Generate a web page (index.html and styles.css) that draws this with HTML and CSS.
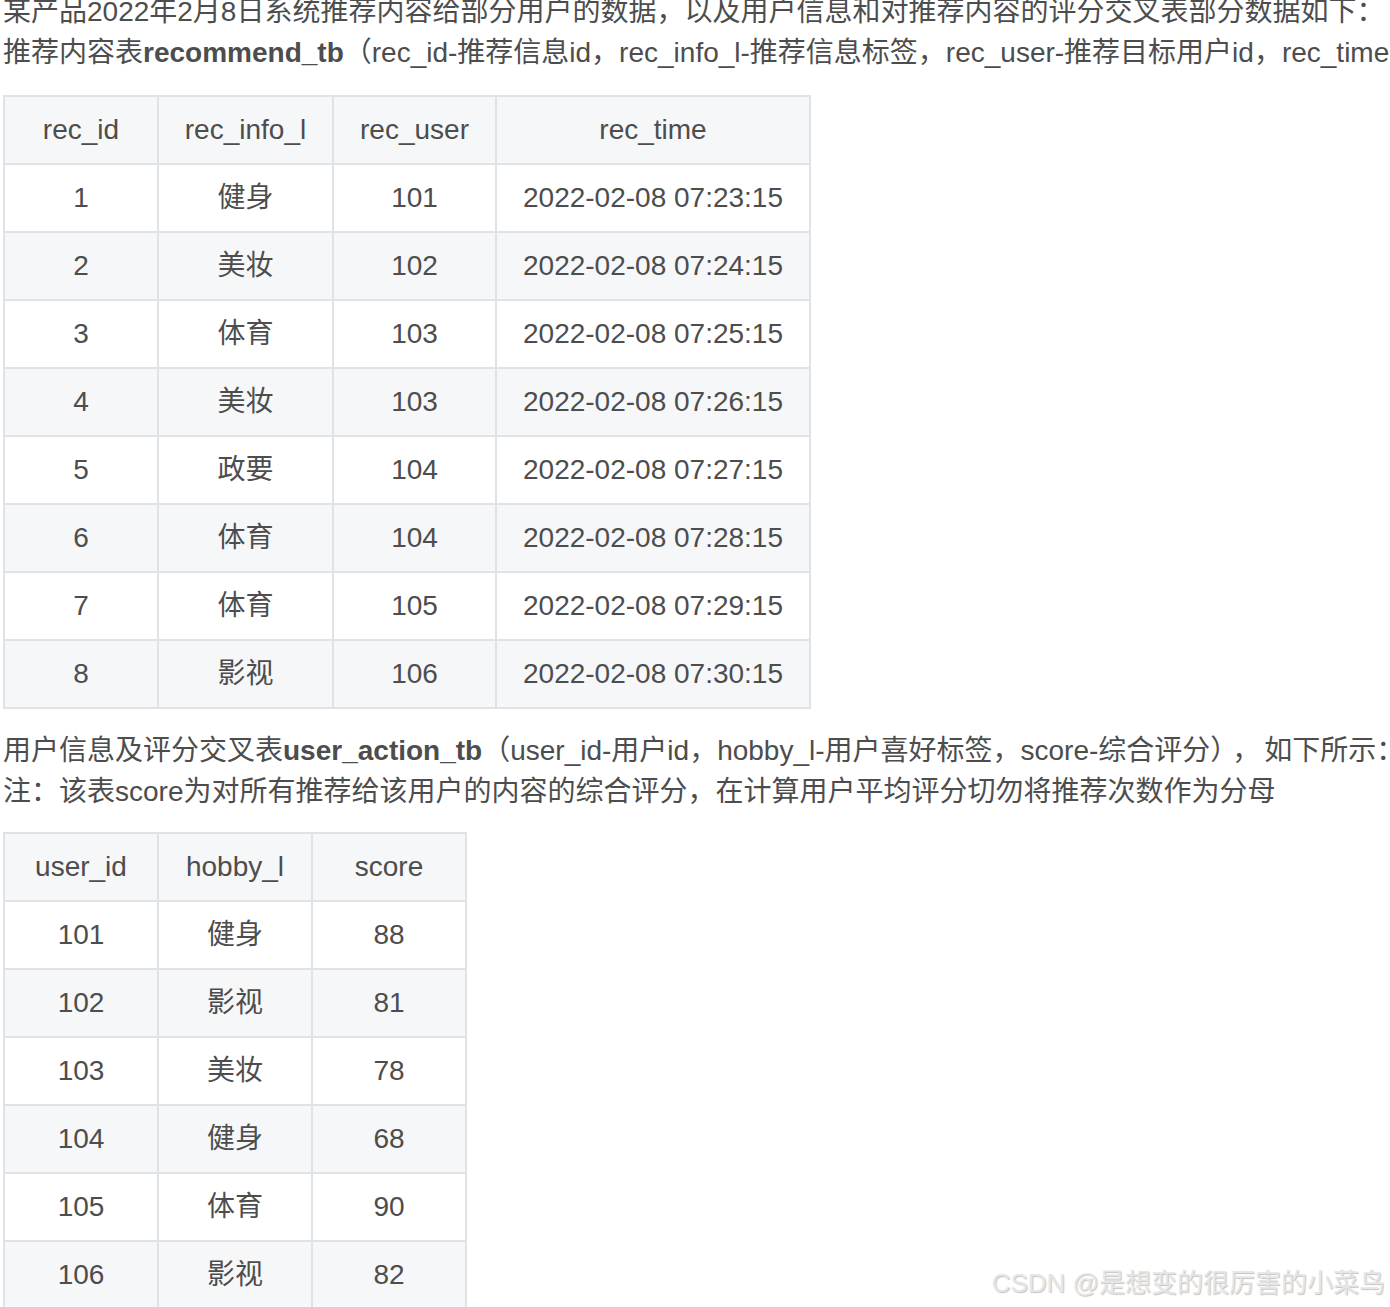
FILE: index.html
```html
<!DOCTYPE html>
<html lang="zh-CN">
<head>
<meta charset="utf-8">
<title>recommend_tb</title>
<link rel="stylesheet" href="styles.css">
</head>
<body>
<div class="article">
  <p class="para">某产品2022年2月8日系统推荐内容给部分用户的数据，以及用户信息和对推荐内容的评分交叉表部分数据如下：<br>推荐内容表<strong>recommend_tb</strong>（rec_id-推荐信息id，rec_info_l-推荐信息标签，rec_user-推荐目标用户id，rec_time</p>
  <table class="tbl tbl-rec">
    <thead>
      <tr><th class="c1">rec_id</th><th class="c2">rec_info_l</th><th class="c3">rec_user</th><th class="c4">rec_time</th></tr>
    </thead>
    <tbody>
      <tr><td>1</td><td>健身</td><td>101</td><td>2022-02-08 07:23:15</td></tr>
      <tr><td>2</td><td>美妆</td><td>102</td><td>2022-02-08 07:24:15</td></tr>
      <tr><td>3</td><td>体育</td><td>103</td><td>2022-02-08 07:25:15</td></tr>
      <tr><td>4</td><td>美妆</td><td>103</td><td>2022-02-08 07:26:15</td></tr>
      <tr><td>5</td><td>政要</td><td>104</td><td>2022-02-08 07:27:15</td></tr>
      <tr><td>6</td><td>体育</td><td>104</td><td>2022-02-08 07:28:15</td></tr>
      <tr><td>7</td><td>体育</td><td>105</td><td>2022-02-08 07:29:15</td></tr>
      <tr><td>8</td><td>影视</td><td>106</td><td>2022-02-08 07:30:15</td></tr>
    </tbody>
  </table>
  <p class="para">用户信息及评分交叉表<strong>user_action_tb</strong>（user_id-用户id，hobby_l-用户喜好标签，score-综合评分）<span class="sep">，</span>如下所示：<br>注：该表score为对所有推荐给该用户的内容的综合评分，在计算用户平均评分切勿将推荐次数作为分母</p>
  <table class="tbl tbl-user">
    <thead>
      <tr><th class="u">user_id</th><th class="u">hobby_l</th><th class="u">score</th></tr>
    </thead>
    <tbody>
      <tr><td>101</td><td>健身</td><td>88</td></tr>
      <tr><td>102</td><td>影视</td><td>81</td></tr>
      <tr><td>103</td><td>美妆</td><td>78</td></tr>
      <tr><td>104</td><td>健身</td><td>68</td></tr>
      <tr><td>105</td><td>体育</td><td>90</td></tr>
      <tr><td>106</td><td>影视</td><td>82</td></tr>
    </tbody>
  </table>
</div>
<div class="watermark">CSDN @是想变的很厉害的小菜鸟</div>
</body>
</html>
```
FILE: styles.css
```css
html, body {
  margin: 0;
  padding: 0;
  background: #ffffff;
  overflow: hidden;
}
body {
  width: 1390px;
  height: 1307px;
  position: relative;
  font-family: "Liberation Sans", Arial, "Noto Sans CJK SC", sans-serif;
  font-size: 28px;
  color: #4d4d4d;
}
.article {
  margin-top: -9px;
  padding-left: 3px;
}
.para {
  margin: 0;
  line-height: 41px;
  white-space: nowrap;
}
.para strong {
  font-weight: bold;
  color: #4d4d4d;
}
.sep {
  padding: 0 4px 0 8px;
}
.tbl {
  border-collapse: collapse;
  margin: 22px 0 21px 0;
}
.tbl-user {
  margin-top: 20px;
}
.tbl th, .tbl td {
  border: 2px solid #dfe2e6;
  height: 68px;
  padding: 0;
  text-align: center;
  font-weight: normal;
  line-height: 30px;
  box-sizing: border-box;
}
.tbl thead tr {
  background: #f6f7f9;
}
.tbl tbody tr:nth-child(2n) {
  background: #f6f7f9;
}
.tbl tbody tr:nth-child(2n+1) {
  background: #ffffff;
}
.c1 { width: 154px; }
.c2 { width: 175px; }
.c3 { width: 163px; }
.c4 { width: 314px; }
.u { width: 154px; }
.watermark {
  position: absolute;
  right: 5px;
  top: 1265px;
  font-size: 26px;
  line-height: 36px;
  color: #e6e6e6;
  text-shadow: 1px 1px 1px #c4c4c4;
  white-space: nowrap;
}
```
